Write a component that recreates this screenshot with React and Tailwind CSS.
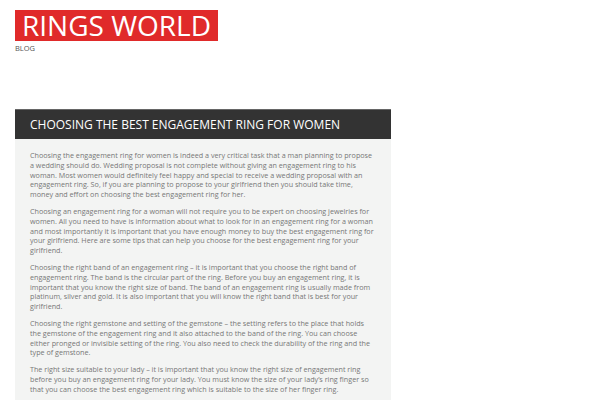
export default function App() {
  const paras = [
    "Choosing the engagement ring for women is indeed a very critical task that a man planning to propose a wedding should do. Wedding proposal is not complete without giving an engagement ring to his woman. Most women would definitely feel happy and special to receive a wedding proposal with an engagement ring. So, if you are planning to propose to your girlfriend then you should take time, money and effort on choosing the best engagement ring for her.",
    "Choosing an engagement ring for a woman will not require you to be expert on choosing jewelries for women. All you need to have is information about what to look for in an engagement ring for a woman and most importantly it is important that you have enough money to buy the best engagement ring for your girlfriend. Here are some tips that can help you choose for the best engagement ring for your girlfriend.",
    "Choosing the right band of an engagement ring – it is important that you choose the right band of engagement ring. The band is the circular part of the ring. Before you buy an engagement ring, it is important that you know the right size of band. The band of an engagement ring is usually made from platinum, silver and gold. It is also important that you will know the right band that is best for your girlfriend.",
    "Choosing the right gemstone and setting of the gemstone – the setting refers to the place that holds the gemstone of the engagement ring and it also attached to the band of the ring. You can choose either pronged or invisible setting of the ring. You also need to check the durability of the ring and the type of gemstone.",
    "The right size suitable to your lady – it is important that you know the right size of engagement ring before you buy an engagement ring for your lady. You must know the size of your lady’s ring finger so that you can choose the best engagement ring which is suitable to the size of her finger ring.",
  ];

  return (
    <div className="h-[400px] overflow-hidden bg-white font-['Open_Sans',sans-serif]">
      <header className="px-[15px] pt-[10px]">
        <div className="inline-block bg-[#e02a2a] px-[7px] h-[31px] leading-[31px] text-[28px] text-white">
          RINGS WORLD
        </div>
        <div className="mt-[1px] text-[7.5px] leading-[10px] text-[#555]">BLOG</div>
      </header>

      <article className="mt-[56px] ml-[15px] w-[376px]">
        <div className="h-[30px] border-t border-[#666] bg-[#333] px-[15px] leading-[29px] text-[12px] text-white">
          CHOOSING THE BEST ENGAGEMENT RING FOR WOMEN
        </div>
        <div className="bg-[#f3f4f3] px-[15px] pt-[12px] pb-[20px]">
          {paras.map((p, i) => (
            <p key={i} className="mb-[7px] text-[7.2px] leading-[9.8px] text-[#777]">
              {p}
            </p>
          ))}
        </div>
      </article>
    </div>
  );
}
